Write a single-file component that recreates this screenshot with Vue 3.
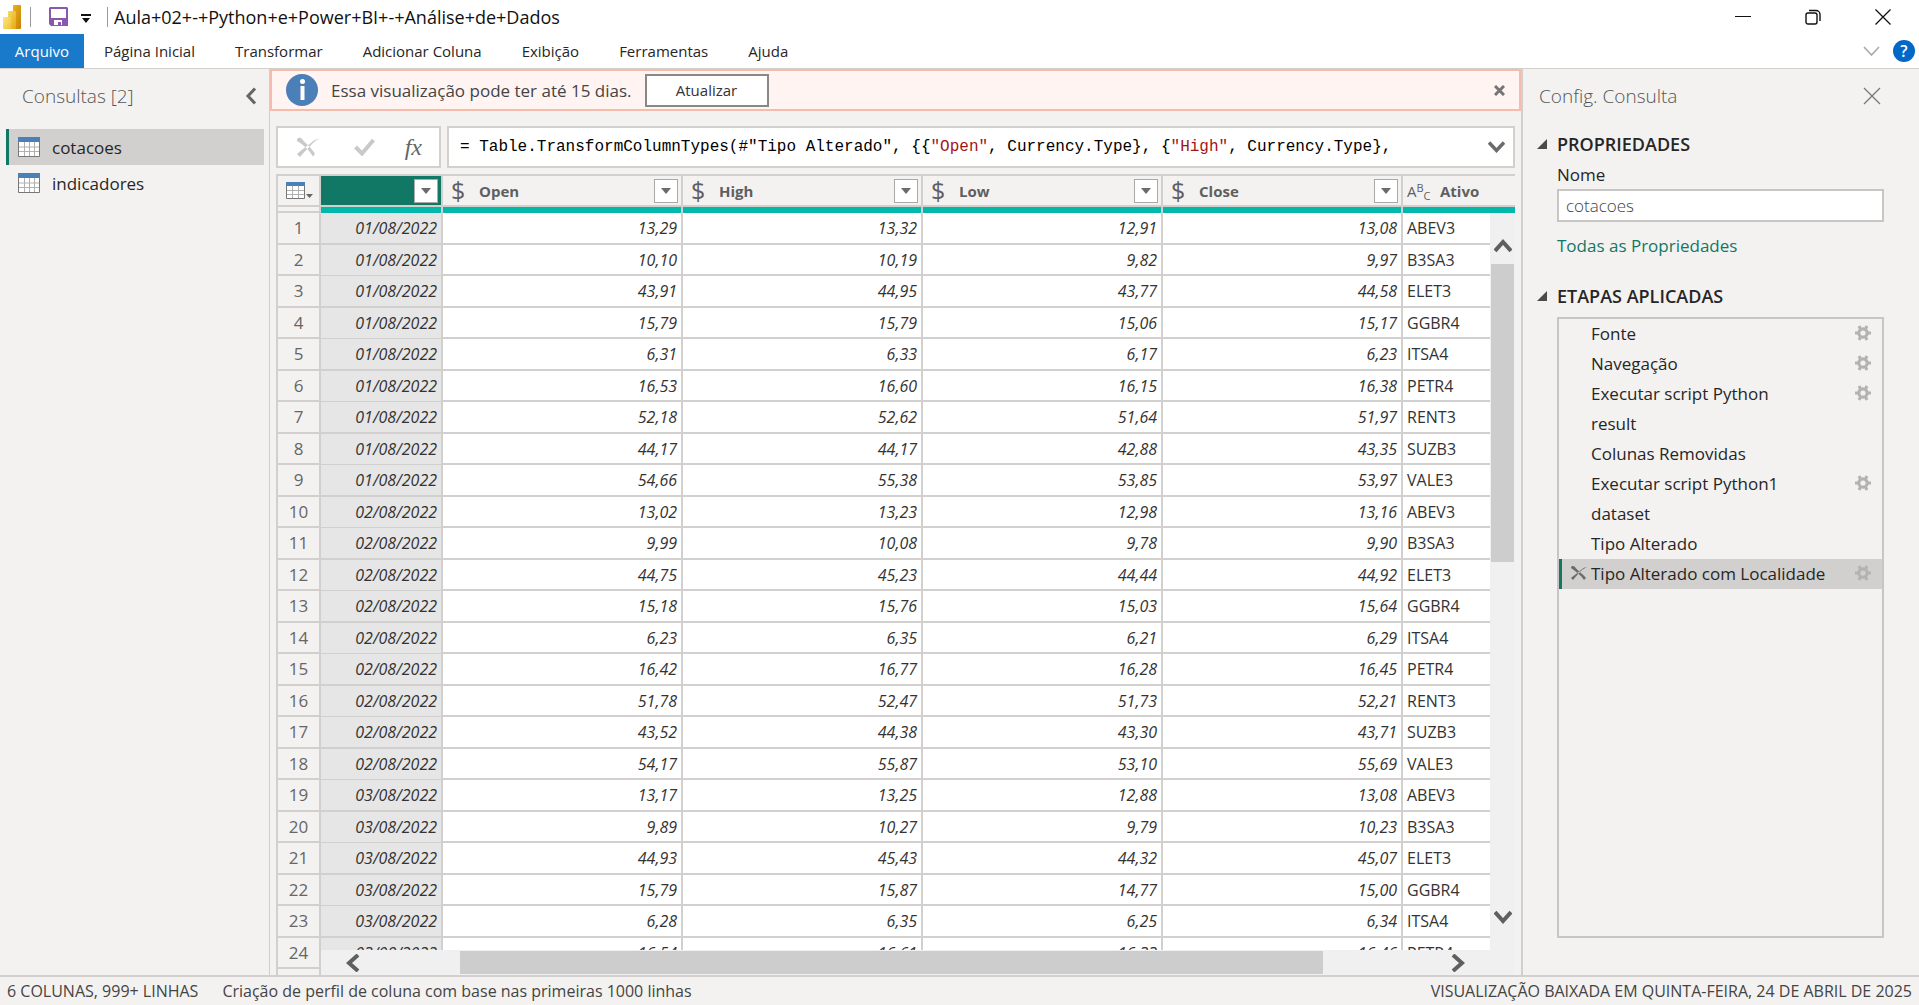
<script setup>
import { ref } from 'vue'

const menus = ['Página Inicial', 'Transformar', 'Adicionar Coluna', 'Exibição', 'Ferramentas', 'Ajuda']
const queries = ['cotacoes', 'indicadores']
const activeQuery = ref('cotacoes')
const queryName = ref('cotacoes')
const currencyColumns = ['Open', 'High', 'Low', 'Close']

const formula = [
  { text: '= Table.TransformColumnTypes(#"Tipo Alterado", {{' },
  { text: '"Open"', literal: true },
  { text: ', Currency.Type}, {' },
  { text: '"High"', literal: true },
  { text: ', Currency.Type},' },
]

const steps = [
  { name: 'Fonte', gear: true },
  { name: 'Navegação', gear: true },
  { name: 'Executar script Python', gear: true },
  { name: 'result' },
  { name: 'Colunas Removidas' },
  { name: 'Executar script Python1', gear: true },
  { name: 'dataset' },
  { name: 'Tipo Alterado' },
  { name: 'Tipo Alterado com Localidade', gear: true },
]
const activeStep = ref('Tipo Alterado com Localidade')

const rows = [
  ['01/08/2022', '13,29', '13,32', '12,91', '13,08', 'ABEV3'],
  ['01/08/2022', '10,10', '10,19', '9,82', '9,97', 'B3SA3'],
  ['01/08/2022', '43,91', '44,95', '43,77', '44,58', 'ELET3'],
  ['01/08/2022', '15,79', '15,79', '15,06', '15,17', 'GGBR4'],
  ['01/08/2022', '6,31', '6,33', '6,17', '6,23', 'ITSA4'],
  ['01/08/2022', '16,53', '16,60', '16,15', '16,38', 'PETR4'],
  ['01/08/2022', '52,18', '52,62', '51,64', '51,97', 'RENT3'],
  ['01/08/2022', '44,17', '44,17', '42,88', '43,35', 'SUZB3'],
  ['01/08/2022', '54,66', '55,38', '53,85', '53,97', 'VALE3'],
  ['02/08/2022', '13,02', '13,23', '12,98', '13,16', 'ABEV3'],
  ['02/08/2022', '9,99', '10,08', '9,78', '9,90', 'B3SA3'],
  ['02/08/2022', '44,75', '45,23', '44,44', '44,92', 'ELET3'],
  ['02/08/2022', '15,18', '15,76', '15,03', '15,64', 'GGBR4'],
  ['02/08/2022', '6,23', '6,35', '6,21', '6,29', 'ITSA4'],
  ['02/08/2022', '16,42', '16,77', '16,28', '16,45', 'PETR4'],
  ['02/08/2022', '51,78', '52,47', '51,73', '52,21', 'RENT3'],
  ['02/08/2022', '43,52', '44,38', '43,30', '43,71', 'SUZB3'],
  ['02/08/2022', '54,17', '55,87', '53,10', '55,69', 'VALE3'],
  ['03/08/2022', '13,17', '13,25', '12,88', '13,08', 'ABEV3'],
  ['03/08/2022', '9,89', '10,27', '9,79', '10,23', 'B3SA3'],
  ['03/08/2022', '44,93', '45,43', '44,32', '45,07', 'ELET3'],
  ['03/08/2022', '15,79', '15,87', '14,77', '15,00', 'GGBR4'],
  ['03/08/2022', '6,28', '6,35', '6,25', '6,34', 'ITSA4'],
  ['03/08/2022', '16,54', '16,61', '16,33', '16,46', 'PETR4'],
]
</script>

<template>
  <div class="app">
    <header class="titlebar">
      <svg class="logo" width="19" height="30" viewBox="0 0 19 30">
        <defs>
          <linearGradient id="pbi-back" x1="0" y1="0" x2="1" y2="1">
            <stop offset="0" stop-color="#e9b418" /><stop offset="1" stop-color="#c98009" />
          </linearGradient>
          <linearGradient id="pbi-mid" x1="0" y1="0" x2="1" y2="1">
            <stop offset="0" stop-color="#f8da5b" /><stop offset="1" stop-color="#e6a816" />
          </linearGradient>
          <linearGradient id="pbi-front" x1="0" y1="0" x2="1" y2="1">
            <stop offset="0" stop-color="#fbe68a" /><stop offset="1" stop-color="#f0c332" />
          </linearGradient>
        </defs>
        <rect x="10" y="3" width="8" height="24" rx="1" fill="url(#pbi-back)" />
        <rect x="5" y="9" width="8" height="18" rx="1" fill="url(#pbi-mid)" />
        <rect x="0" y="15" width="8" height="12" rx="1" fill="url(#pbi-front)" />
      </svg>
      <span class="divider"></span>
      <button class="icon-btn save" aria-label="Salvar">
        <svg width="19" height="20" viewBox="0 0 19 20">
          <path d="M1 0h17l1 1v18H2l-2-2V1z" fill="#8a57ae" />
          <path d="M2 2h15v9H2z" fill="#fff" />
          <path d="M5 18v-5h8v5h-1v-3H9v3z" fill="#fff" />
        </svg>
      </button>
      <button class="icon-btn customize" aria-label="Personalizar">
        <svg width="10" height="10" viewBox="0 0 10 10"><path d="M0 0h10v2H0z M1 4h8L5 9z" fill="#111" /></svg>
      </button>
      <span class="divider"></span>
      <h1>Aula+02+-+Python+e+Power+BI+-+Análise+de+Dados</h1>
      <div class="window-controls">
        <button class="icon-btn" aria-label="Minimizar"><svg width="16" height="16" viewBox="0 0 16 16"><path d="M0 7.500h16" stroke="#111" /></svg></button>
        <button class="icon-btn" aria-label="Restaurar">
          <svg width="16" height="16" viewBox="0 0 16 16" fill="none" stroke="#111" stroke-width="1.400"><rect x="1" y="4" width="11" height="11" rx="2" /><path d="M4 1.500h7a4 4 0 0 1 4 4V12" /></svg>
        </button>
        <button class="icon-btn" aria-label="Fechar"><svg width="16" height="16" viewBox="0 0 16 16"><path d="M0.500 0.500l15 15M15.500 0.500l-15 15" stroke="#111" stroke-width="1.300" /></svg></button>
      </div>
    </header>

    <nav class="menubar">
      <button class="file-tab">Arquivo</button>
      <button v-for="m in menus" :key="m" class="tab">{{ m }}</button>
      <div class="menu-end">
        <button class="icon-btn" aria-label="Expandir faixa"><svg width="17" height="10" viewBox="0 0 17 10"><path d="M1 1l7.500 8L16 1" fill="none" stroke="#a8a8a8" stroke-width="1.600" /></svg></button>
        <button class="help" aria-label="Ajuda">?</button>
      </div>
    </nav>

    <main class="workspace">
      <aside class="queries">
        <div class="pane-title">
          <h2>Consultas [2]</h2>
          <button class="icon-btn" aria-label="Recolher"><svg width="12" height="18" viewBox="0 0 12 18"><path d="M10 1.500L3 9l7 7.500" fill="none" stroke="#666" stroke-width="3" /></svg></button>
        </div>
        <ul>
          <li v-for="q in queries" :key="q">
            <button class="query" :class="{ active: q === activeQuery }" @click="activeQuery = q">
              <svg width="22" height="20" viewBox="0 0 22 20">
                <path d="M.5 1v18.500h21V1" fill="#fff" stroke="#777" />
                <path d="M1 10h20M1 14.500h20M6.500 5v14M11.500 5v14M16.500 5v14" stroke="#b0b0b0" />
                <path d="M0 0h22v5H0z" fill="#4a7fb8" />
              </svg>
              {{ q }}
            </button>
          </li>
        </ul>
      </aside>

      <section class="editor">
        <div class="notice">
          <svg width="32" height="32" viewBox="0 0 32 32">
            <circle cx="16" cy="16" r="16" fill="#4a7fb8" />
            <circle cx="16.500" cy="7.500" r="2.500" fill="#fff" /><path d="M14.500 12h4v14h-4z" fill="#fff" />
          </svg>
          <span>Essa visualização pode ter até 15 dias.</span>
          <button class="refresh">Atualizar</button>
          <button class="icon-btn dismiss" aria-label="Fechar aviso"><svg width="11" height="11" viewBox="0 0 11 11"><path d="M1 1l9 9M10 1l-9 9" stroke="#757575" stroke-width="3" /></svg></button>
        </div>

        <div class="formula-row">
          <div class="formula-actions">
            <button class="icon-btn" aria-label="Cancelar">
              <svg width="22" height="20" viewBox="0 0 22 20"><path d="M0 2q3-3 5 0c4 5 9 8 13 15l-2 2.500C12 13 8 9 0 4z M22 2q-4 0-8 4C9 10 4 13 0 17l3 3C7 15 12 10 16 6q3-3 6-4z" fill="#c9c9c9" /></svg>
            </button>
            <button class="icon-btn" aria-label="Confirmar">
              <svg width="28" height="18" viewBox="0 0 28 18"><path d="M7.500 9l6.500 6.500L25.500 2" fill="none" stroke="#c9c9c9" stroke-width="4" /></svg>
            </button>
            <button class="icon-btn fx" aria-label="Inserir etapa">fx</button>
          </div>
          <div class="formula">
            <code><span v-for="(t, i) in formula" :key="i" :class="{ literal: t.literal }">{{ t.text }}</span></code>
            <button class="icon-btn" aria-label="Expandir fórmula"><svg width="17" height="12" viewBox="0 0 17 12"><path d="M1 1.500l7.500 8 7.500-8" fill="none" stroke="#6b6b6b" stroke-width="3.400" /></svg></button>
          </div>
        </div>

        <div class="grid">
          <table>
            <colgroup>
              <col class="c-num" /><col class="c-date" /><col v-for="n in 5" :key="n" class="c-data" />
            </colgroup>
            <thead>
              <tr class="names">
                <th class="corner">
                  <button class="icon-btn" aria-label="Opções da tabela">
                    <svg width="28" height="18" viewBox="0 0 28 18">
                      <path d="M.5 1v15.500h18V1" fill="#fff" stroke="#777" />
                      <path d="M1 8.500h17M1 12.500h17M6.500 4v12M12.500 4v12" stroke="#b0b0b0" />
                      <path d="M0 0h19v4H0z" fill="#4a7fb8" /><path d="M20 12h7l-3.500 4z" fill="#666" />
                    </svg>
                  </button>
                </th>
                <th class="selected">
                  <div class="head"><button class="filter" aria-label="Filtrar data"><svg width="10" height="6" viewBox="0 0 10 6"><path d="M0 0h10L5 6z" fill="#6b6b6b" /></svg></button></div>
                </th>
                <th v-for="c in currencyColumns" :key="c">
                  <div class="head">
                    <span class="currency">$</span><span class="col-name">{{ c }}</span>
                    <button class="filter" :aria-label="'Filtrar ' + c"><svg width="10" height="6" viewBox="0 0 10 6"><path d="M0 0h10L5 6z" fill="#6b6b6b" /></svg></button>
                  </div>
                </th>
                <th>
                  <div class="head"><span class="abc">A<sup>B</sup><sub>C</sub></span><span class="col-name">Ativo</span></div>
                </th>
              </tr>
              <tr class="quality"><td class="num"></td><td v-for="n in 6" :key="n"></td></tr>
            </thead>
            <tbody>
              <tr v-for="(r, i) in rows" :key="i">
                <th class="num" scope="row">{{ i + 1 }}</th>
                <td class="date">{{ r[0] }}</td>
                <td v-for="n in 4" :key="n">{{ r[n] }}</td>
                <td class="text">{{ r[5] }}</td>
              </tr>
              <tr><th class="num"></th><td class="date"></td><td v-for="n in 5" :key="n"></td></tr>
            </tbody>
          </table>
          <div class="vbar">
            <button class="icon-btn" aria-label="Rolar para cima"><svg width="18" height="14" viewBox="0 0 18 14"><path d="M1 12l8-9 8 9" fill="none" stroke="#5f5f5f" stroke-width="4" /></svg></button>
            <div class="track"><div class="thumb"></div></div>
            <button class="icon-btn" aria-label="Rolar para baixo"><svg width="18" height="14" viewBox="0 0 18 14"><path d="M1 2l8 9 8-9" fill="none" stroke="#5f5f5f" stroke-width="4" /></svg></button>
          </div>
          <div class="hbar">
            <button class="icon-btn" aria-label="Rolar para a esquerda"><svg width="14" height="18" viewBox="0 0 14 18"><path d="M12 1L3 9l9 8" fill="none" stroke="#5f5f5f" stroke-width="4" /></svg></button>
            <div class="track"><div class="thumb"></div></div>
            <button class="icon-btn" aria-label="Rolar para a direita"><svg width="14" height="18" viewBox="0 0 14 18"><path d="M2 1l9 8-9 8" fill="none" stroke="#5f5f5f" stroke-width="4" /></svg></button>
          </div>
        </div>
      </section>

      <aside class="settings">
        <div class="pane-title">
          <h2>Config. Consulta</h2>
          <button class="icon-btn" aria-label="Fechar painel"><svg width="18" height="18" viewBox="0 0 18 18"><path d="M1 1l16 16M17 1L1 17" stroke="#777" stroke-width="1.300" /></svg></button>
        </div>
        <h3><svg width="10" height="10" viewBox="0 0 10 10"><path d="M10 0v10H0z" fill="#4a4a4a" /></svg>PROPRIEDADES</h3>
        <div class="props">
          <label for="query-name">Nome</label>
          <input id="query-name" v-model="queryName" type="text" />
          <a href="#">Todas as Propriedades</a>
        </div>
        <h3><svg width="10" height="10" viewBox="0 0 10 10"><path d="M10 0v10H0z" fill="#4a4a4a" /></svg>ETAPAS APLICADAS</h3>
        <ol class="steps">
          <li v-for="s in steps" :key="s.name" :class="{ active: s.name === activeStep }">
            <button class="icon-btn remove" :aria-label="'Excluir ' + s.name">
              <svg v-if="s.name === activeStep" width="16" height="14" viewBox="0 0 16 14"><path d="M0 1q2-2 4 0c3 4 7 6 11 11l-2 2C10 9 5 6 0 2z M16 1q-3 0-6 3C7 7 3 9 0 12l2 2C5 10 8 7 11 4q3-2 5-3z" fill="#6b6b6b" /></svg>
            </button>
            <button class="step-name" @click="activeStep = s.name">{{ s.name }}</button>
            <button v-if="s.gear" class="icon-btn" :aria-label="'Configurar ' + s.name">
              <svg width="16" height="16" viewBox="0 0 16 16" fill="none" stroke="#b3b3b3"><circle cx="8" cy="8" r="4.200" stroke-width="3.200" /><path d="M0 8h3M13 8h3M4 1l1.500 3M12 1l-1.500 3M4 15l1.500-3M12 15l-1.500-3" stroke-width="3" /></svg>
            </button>
          </li>
        </ol>
      </aside>
    </main>

    <footer class="status">
      <span>6 COLUNAS, 999+ LINHAS</span>
      <span>Criação de perfil de coluna com base nas primeiras 1000 linhas</span>
      <span class="downloaded">VISUALIZAÇÃO BAIXADA EM QUINTA-FEIRA, 24 DE ABRIL DE 2025</span>
    </footer>
  </div>
</template>

<style>
body {
  margin: 0;
  overflow: hidden;
}
</style>

<style scoped>
.app {
  display: flex;
  flex-direction: column;
  height: 100vh;
  background: #f3f2f1;
  color: #333;
  font-family: "Open Sans", "Noto Sans", sans-serif;
  font-size: 17px;
}
.app * { box-sizing: border-box; }
h1, h2, h3, ul, ol { margin: 0; padding: 0; font-weight: 400; }
ul, ol { list-style: none; }
svg { display: block; flex: none; }
button { font: inherit; color: inherit; padding: 0; border: 0; background: none; white-space: nowrap; }
.icon-btn { display: flex; align-items: center; justify-content: center; flex: none; }

.titlebar { display: flex; align-items: center; height: 34px; padding-left: 3px; background: #fff; }
.divider { width: 1px; height: 20px; background: #999; }
.logo { margin-right: 8px; }
.save { margin-left: 18px; }
.customize { margin: 4px 16px 0 13px; }
h1 { margin-left: 6px; font-size: 18px; line-height: 34px; color: #111; }
.window-controls { display: flex; gap: 54px; margin-left: auto; padding-right: 28px; }

.menubar { display: flex; height: 35px; background: #fff; border-bottom: 1px solid #d2d0ce; font-size: 15px; color: #262626; }
.file-tab { width: 84px; background: #1979ca; color: #fff; }
.tab { padding: 0 20px; }
.menu-end { display: flex; align-items: center; gap: 13px; margin-left: auto; padding-right: 4px; }
.help { width: 22px; height: 22px; border-radius: 50%; background: #0268c8; color: #fff; font-size: 16px; font-weight: 600; line-height: 22px; }

.workspace { display: flex; flex: 1; min-height: 0; }
.pane-title { display: flex; align-items: center; justify-content: space-between; height: 54px; color: #555; }
h2 { font-size: 19px; font-weight: 300; }

.queries { flex: none; width: 270px; padding-left: 6px; border-right: 1px solid #d2d0ce; }
.queries .pane-title { padding: 0 12px 0 16px; margin-bottom: 6px; }
.queries ul { width: 258px; }
.query { display: flex; align-items: center; gap: 12px; width: 100%; height: 36px; padding-left: 9px; border-left: 3px solid transparent; color: #262626; }
.query.active { background: #d2d0ce; border-left-color: #117865; }

.editor { display: flex; flex: 1; flex-direction: column; min-width: 0; }
.notice { display: flex; align-items: center; flex: none; height: 42px; padding: 0 14px; background: #fff4f1; border: 2px solid #f4bdab; color: #444; }
.notice span { margin: 0 13px; }
.refresh { width: 124px; height: 33px; background: #fff; border: 2px solid #888; font-size: 15px; color: #333; }
.dismiss { margin-left: auto; }
.formula-row { display: flex; gap: 6px; flex: none; height: 42px; margin: 15px 6px 6px; }
.formula-actions, .formula { display: flex; align-items: center; background: #fff; border: 2px solid #d2d0ce; }
.formula-actions { width: 165px; justify-content: space-between; padding: 0 17px 0 19px; }
.fx { color: #666; font: italic 24px/30px "Liberation Serif", serif; }
.formula { flex: 1; min-width: 0; padding: 0 8px 0 11px; justify-content: space-between; }
code { color: #000; font: 16px/24px "Liberation Mono", monospace; white-space: pre; }
.literal { color: #a31515; }

.grid { position: relative; flex: 1; min-height: 0; margin: 0 6px; overflow: hidden; }
table { width: 1367px; table-layout: fixed; border-collapse: separate; border-spacing: 0; border-top: 2px solid #d2d0ce; border-left: 2px solid #d2d0ce; }
.c-num { width: 43px; }
.c-date { width: 122px; }
.c-data { width: 240px; }
th, td { padding: 0; border-right: 2px solid #d2d0ce; border-bottom: 2px solid #d2d0ce; white-space: nowrap; }
.names { height: 31px; color: #5f5f5f; }
.corner { background: #f3f2f1; }
.corner .icon-btn { margin-left: 8px; }
.selected { background: #117865; }
.head { display: flex; align-items: center; height: 29px; padding: 0 3px 0 8px; }
.currency { width: 28px; font-size: 25px; font-weight: 400; line-height: 29px; text-align: left; }
.col-name { font-size: 15px; font-weight: 700; }
.filter { display: flex; align-items: center; justify-content: center; width: 24px; height: 24px; margin-left: auto; background: #fff; border: 1px solid #aaa; }
.abc { width: 28px; margin: 0 5px 0 -4px; font-size: 15px; font-weight: 400; text-align: left; }
.abc sup, .abc sub { font-size: 11px; line-height: 0; }
.abc sup { vertical-align: 5px; }
.abc sub { vertical-align: -3px; }
.quality { height: 6px; }
.quality td { height: 6px; background: #01b8aa; border-bottom: 0; }
.quality .num { background: #f3f2f1; border-bottom: 2px solid #d2d0ce; }
tbody tr { height: 32px; }
tbody tr:nth-child(even) { height: 31px; }
tbody td { padding: 0 4px; background: #fff; font-size: 16px; font-style: italic; line-height: 24px; text-align: right; }
tbody .num { color: #666; font-weight: 400; line-height: 24px; }
tbody .date { background: #e6e6e6; }
tbody tr:nth-child(even) .date { border-bottom-width: 1px; }
tbody .text { font-style: normal; text-align: left; }

.vbar { position: absolute; top: 39px; right: 0; bottom: 25px; display: flex; flex-direction: column; width: 25px; padding: 26px 1px; background: #f0f0f0; }
.hbar { position: absolute; left: 45px; right: 0; bottom: 0; display: flex; height: 25px; padding: 1px 50px 1px 25px; background: #f0f0f0; }
.track { flex: 1; }
.thumb { background: #cdcdcd; }
.vbar .track { margin: 11px 0; }
.vbar .thumb { height: 47%; }
.hbar .track { margin: 0 10px 0 100px; }
.hbar .thumb { width: 88%; height: 100%; }

.settings { display: flex; flex: none; flex-direction: column; width: 398px; padding: 0 35px 37px 14px; border-left: 2px solid #d2d0ce; }
.settings .pane-title { padding: 0 3px 0 2px; }
h3 { display: flex; align-items: center; gap: 10px; height: 42px; font-size: 18px; font-weight: 600; line-height: 24px; color: #262626; }
.props { display: flex; flex-direction: column; align-items: flex-start; margin: 0 0 17px 20px; }
.props label { height: 24px; line-height: 20px; color: #262626; }
.props input { width: 100%; height: 33px; margin-bottom: 12px; padding: 0 7px; border: 2px solid #c8c6c4; background: #fff; color: #444; font: inherit; font-weight: 300; }
.props a { color: #117865; line-height: 24px; text-decoration: none; }
.steps { flex: 1; margin-left: 20px; border: 2px solid #c8c6c4; }
.steps li { display: flex; align-items: center; height: 30px; padding: 0 11px 2px 9px; border-left: 3px solid transparent; color: #262626; }
.steps li.active { background: #d2d0ce; border-left-color: #117865; }
.remove { width: 16px; margin-right: 4px; }
.step-name { flex: 1; text-align: left; }

.status { display: flex; align-items: center; gap: 24px; height: 30px; padding: 0 7px; border-top: 2px solid #d2d0ce; font-size: 16px; color: #444; }
.downloaded { margin-left: auto; }
</style>
